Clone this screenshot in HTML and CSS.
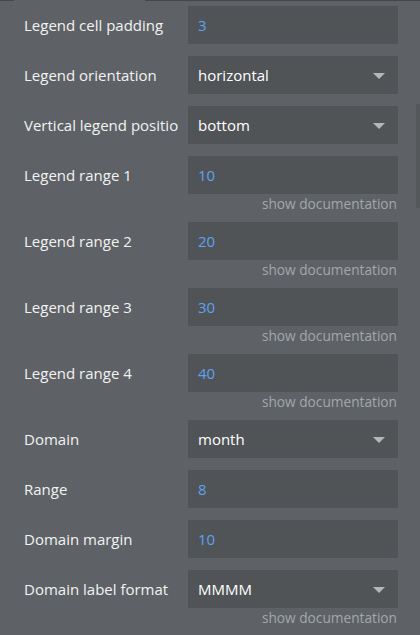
FILE: index.html
```html
<!DOCTYPE html>
<html>
<head>
<meta charset="utf-8">
<link rel="stylesheet" href="styles.css">
</head>
<body>
<div class="topline"><span class="seg dark s1"></span><span class="seg light s2"></span><span class="seg dark s3"></span></div>
<div class="scrollbar"></div>
<div class="panel">
  <div class="row"><div class="label">Legend cell padding</div><div class="field num">3</div></div>
  <div class="row"><div class="label">Legend orientation</div><div class="field select">horizontal<span class="arrow"></span></div></div>
  <div class="row"><div class="label">Vertical legend position</div><div class="field select">bottom<span class="arrow"></span></div></div>
  <div class="row"><div class="label">Legend range 1</div><div class="field num">10</div><div class="doc">show documentation</div></div>
  <div class="row"><div class="label">Legend range 2</div><div class="field num">20</div><div class="doc">show documentation</div></div>
  <div class="row"><div class="label">Legend range 3</div><div class="field num">30</div><div class="doc">show documentation</div></div>
  <div class="row"><div class="label">Legend range 4</div><div class="field num">40</div><div class="doc">show documentation</div></div>
  <div class="row"><div class="label">Domain</div><div class="field select">month<span class="arrow"></span></div></div>
  <div class="row"><div class="label">Range</div><div class="field num">8</div></div>
  <div class="row"><div class="label">Domain margin</div><div class="field num">10</div></div>
  <div class="row"><div class="label">Domain label format</div><div class="field select">MMMM<span class="arrow"></span></div><div class="doc">show documentation</div></div>
</div>
</body>
</html>
```
FILE: styles.css
```css
html, body {
  margin: 0;
  padding: 0;
  background: #5e6266;
  width: 420px;
  height: 635px;
  overflow: hidden;
  font-family: "Open Sans", "Noto Sans", sans-serif;
}
body { position: relative; }
.topline {
  display: flex;
  height: 1px;
}
.seg { display: block; height: 1px; }
.dark { background: #44484b; }
.light { background: #5e6266; }
.s1 { width: 14px; }
.s2 { width: 131px; }
.s3 { flex: 1; }
.scrollbar {
  position: absolute;
  right: 0;
  top: 104px;
  width: 4px;
  height: 104px;
  background: #54585b;
}
.panel {
  display: flex;
  flex-direction: column;
  gap: 12px;
  padding: 5px 0 0 24px;
}
.row {
  display: grid;
  grid-template-columns: 164px 210px;
  align-items: center;
}
.label {
  color: #f2f2f2;
  font-size: 15px;
  white-space: nowrap;
  overflow: hidden;
  width: 155px;
}
.field {
  height: 38px;
  background: #505457;
  box-sizing: border-box;
  padding-left: 10px;
  display: flex;
  align-items: center;
  font-size: 15px;
  color: #ffffff;
  position: relative;
}
.field.num { color: #5ea2f2; }
.arrow {
  position: absolute;
  right: 13px;
  top: 17px;
  width: 0;
  height: 0;
  border-left: 6px solid transparent;
  border-right: 6px solid transparent;
  border-top: 6px solid #b4b7ba;
}
.doc {
  grid-column: 2;
  text-align: right;
  font-size: 13.7px;
  color: #a3a7aa;
  height: 16px;
  line-height: 20px;
  margin-right: 1px;
}
```
